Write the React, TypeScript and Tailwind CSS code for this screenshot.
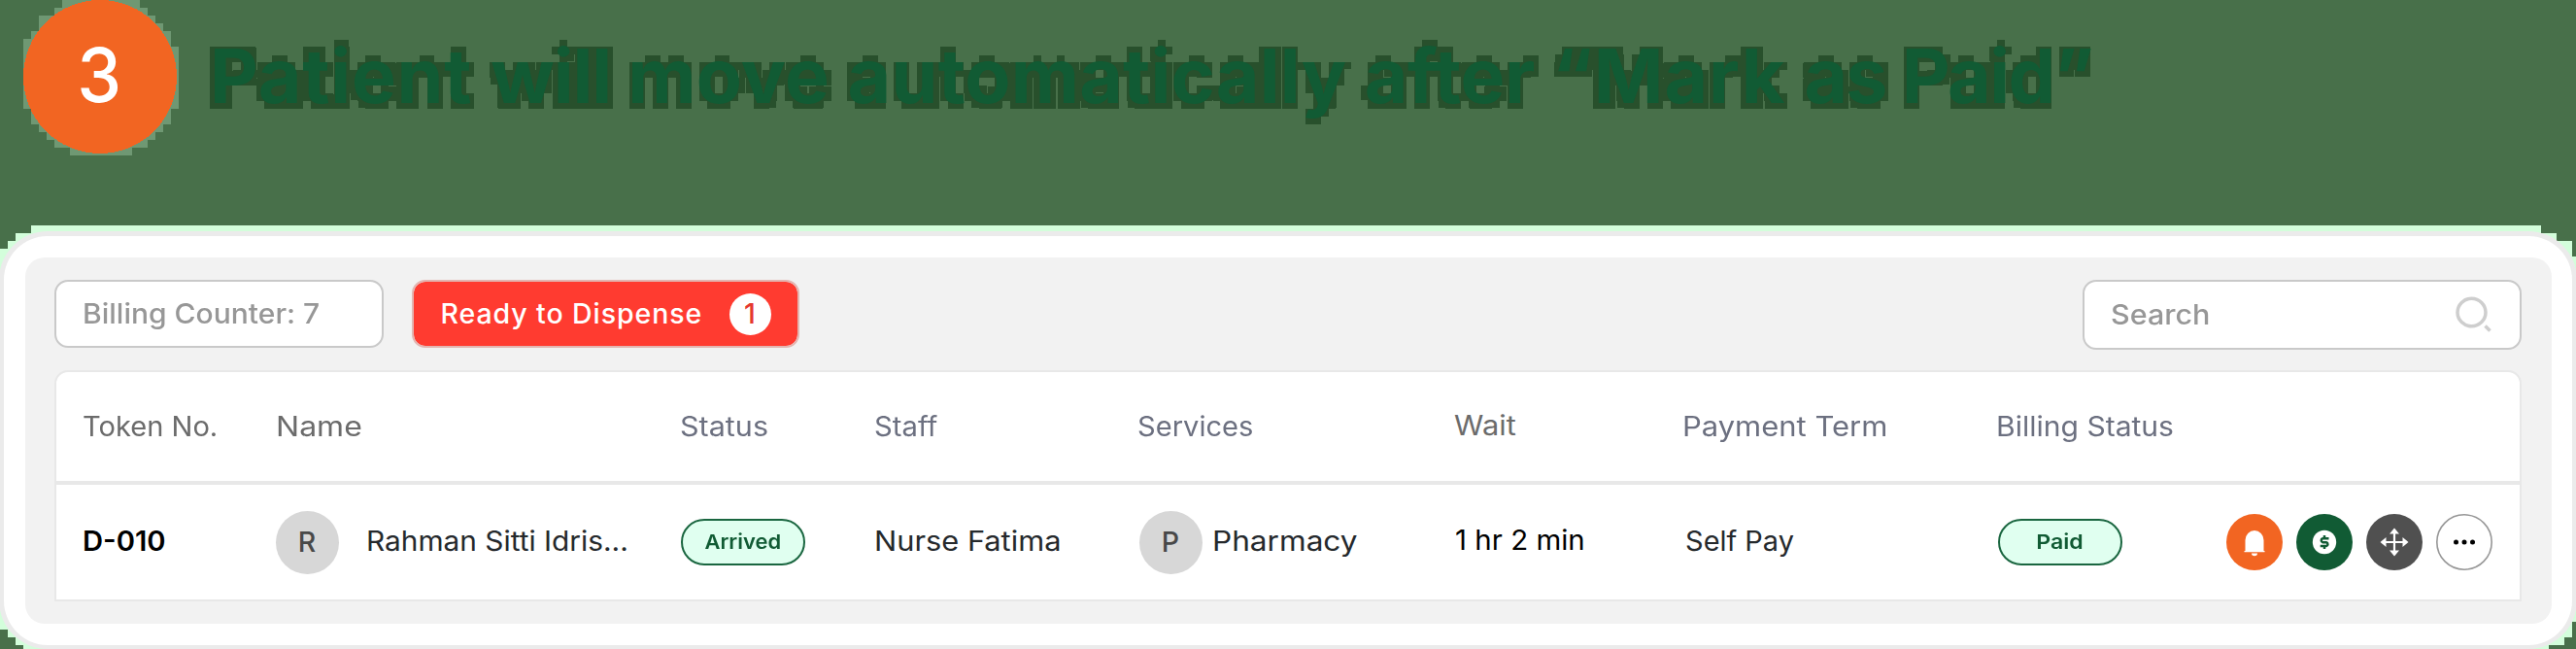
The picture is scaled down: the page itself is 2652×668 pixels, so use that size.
import type { ReactNode } from 'react';

const HALO_ROWS: [number, number, number, number][] = [
  [64, 0, 80, 8],
  [56, 8, 96, 8],
  [40, 16, 120, 8],
  [40, 24, 128, 8],
  [32, 32, 144, 8],
  [24, 40, 152, 8],
  [24, 48, 160, 64],
  [32, 112, 144, 16],
  [40, 128, 128, 8],
  [48, 136, 112, 8],
  [56, 144, 96, 8],
  [72, 152, 64, 8],
];

function StepBadge() {
  return (
    <div className="relative h-40 w-46 shrink-0">
      <svg className="absolute inset-0" width="184" height="160" shapeRendering="crispEdges" aria-hidden="true">
        {HALO_ROWS.map(([x, y, w, h]) => (
          <rect key={y} x={x} y={y} width={w} height={h} fill="#6f9873" />
        ))}
        <circle cx="103" cy="79" r="79" fill="#f26522" />
      </svg>
      <div className="relative flex h-[158px] w-[206px] items-center justify-center text-[77px] font-medium text-white">
        <span className="translate-x-[-1px] translate-y-[-1px] scale-x-95">3</span>
      </div>
    </div>
  );
}

/* Paints an 8px mosaic of the text's silhouette behind the text. */
function MosaicFilter() {
  return (
    <svg width="0" height="0" className="absolute" aria-hidden="true">
      <filter id="mosaic" filterUnits="userSpaceOnUse" primitiveUnits="userSpaceOnUse" x="0" y="0" width="2000" height="160" colorInterpolationFilters="sRGB">
        <feMorphology in="SourceAlpha" operator="dilate" radius="3" result="fat" />
        <feFlood x="3" y="3" width="2" height="2" floodColor="#000" result="dot" />
        <feOffset in="dot" dx="0" dy="0" x="0" y="0" width="8" height="8" result="cell" />
        <feTile in="cell" result="grid" />
        <feComposite in="fat" in2="grid" operator="in" />
        <feComponentTransfer>
          <feFuncA type="discrete" tableValues="0 0 1 1" />
        </feComponentTransfer>
        <feMorphology operator="dilate" radius="3" result="blocks" />
        <feFlood floodColor="#28502c" />
        <feComposite in2="blocks" operator="in" result="backing" />
        <feMerge>
          <feMergeNode in="backing" />
          <feMergeNode in="SourceGraphic" />
        </feMerge>
      </filter>
    </svg>
  );
}

function CardEdge() {
  return (
    <svg className="absolute top-0 left-0" width="2652" height="436" shapeRendering="crispEdges" aria-hidden="true">
      <path
        d="M32 0H2616V8H2632V16H2648V32H2652V408H2648V424H2640V432H2624V436H24V432H16V424H8V416H0V24H8V16H16V8H32Z"
        fill="#d3fedb"
      />
    </svg>
  );
}

function Avatar({ children }: { children: ReactNode }) {
  return (
    <div className="flex size-[65px] shrink-0 items-center justify-center rounded-full bg-[#d7d7d7] text-[28.5px] font-medium text-[#484848]">
      {children}
    </div>
  );
}

function Pill({ children }: { children: ReactNode }) {
  return (
    <div className="flex h-12 w-32 items-center justify-center rounded-full border-2 border-[#1a6640] bg-[#e0fff0] text-[20.5px] font-semibold text-[#115b34]">
      {children}
    </div>
  );
}

function BellIcon() {
  return (
    <svg width="58" height="58" viewBox="0 0 58 58" fill="#fff">
      <path d="M19.500 38V27a9.500 10 0 0 1 19 0v11h1v1.300H18.500V38z" />
      <path d="M26 40.500h6a3 2.800 0 0 1-6 0z" />
    </svg>
  );
}

function DollarIcon() {
  return (
    <svg width="58" height="58" viewBox="0 0 58 58">
      <circle cx="29" cy="29" r="12.200" fill="#fff" />
      <path d="M33.500 25.300h-6.200a2 2 0 0 0 0 3.900h3.600a2 2 0 0 1 0 3.900h-6.200M29 22v3M29 33.500V36" fill="none" stroke="#115b34" strokeWidth="2.500" />
    </svg>
  );
}

function MoveIcon() {
  return (
    <svg width="58" height="58" viewBox="0 0 58 58" fill="#fff">
      <path d="M29 17.500v23M17.500 29h23" stroke="#fff" strokeWidth="2.200" />
      <path d="M29 14.500l5 6H24zM29 43.500l5-6H24zM14.500 29l6-5v10zM43.500 29l-6-5v10z" />
    </svg>
  );
}

function MoreIcon() {
  return (
    <svg width="58" height="58" viewBox="0 0 58 58" fill="#000">
      <circle cx="29" cy="29" r="28.200" fill="#fff" stroke="#979797" strokeWidth="1.600" />
      <circle cx="20.500" cy="29" r="2.500" />
      <circle cx="29" cy="29" r="2.500" />
      <circle cx="37.500" cy="29" r="2.500" />
    </svg>
  );
}

const GRID = 'grid grid-cols-[199px_416px_200px_271px_325px_236px_323px_236px_1fr] items-center pl-[26.5px]';

export default function App() {
  return (
    <div className="h-[668px] w-[2652px] overflow-hidden bg-[#48704a] font-['Inter',sans-serif] whitespace-nowrap">
      <MosaicFilter />
      <header className="flex h-[232px] items-start">
        <StepBadge />
        <h1 className="ml-8 h-40 w-[2000px] text-[77px] leading-[157px] font-bold text-[#115b34] [filter:url(#mosaic)]">
          <span className="tracking-[0.8px]">Patient </span>
          <span className="tracking-[-1.1px]">will </span>
          <span className="tracking-[0.3px]">move </span>
          <span className="tracking-[0.2px]">automatically </span>
          <span className="tracking-[-0.3px]">after </span>
          <span className="tracking-[1px]">“Mark </span>
          <span className="tracking-[-2px]">as </span>
          <span className="tracking-[-1.5px]">Paid”</span>
        </h1>
      </header>

      <div className="relative">
        <CardEdge />
        <main className="relative -mx-px flex h-[436px] flex-col pt-1.5">
          <div className="flex h-[430px] flex-col rounded-[50px] border-x-5 border-t-5 border-b-4 border-[#ebebeb] bg-white px-[21.5px] pt-[21.500px] pb-[22px]">
            <div className="flex flex-1 flex-col rounded-[20px] bg-[#f2f2f2] pr-[31px] pl-[30.500px] pt-[23.500px]">
              <div className="flex h-[72px] items-start gap-[29px]">
                <div className="flex h-[70px] w-[339px] items-center rounded-[14px] border-2 border-[#c9c9c9] bg-white pl-[26.5px] text-[28.5px] font-medium text-[#979797]">
                  <span className="origin-left scale-x-[1.053]">Billing Counter: 7</span>
                </div>
                <div className="flex h-[70px] w-[399px] items-center rounded-[14px] border-2 border-[#e3b5b1] bg-[#ff3b30] bg-clip-padding pl-[27.500px] text-[28.5px] font-medium text-white">
                  <span className="w-[268px] origin-left tracking-[0.92px]">Ready to Dispense</span>
                  <span className="ml-[29px] flex size-[43px] items-center justify-center rounded-full bg-white text-[#e5392f]">
                    1
                  </span>
                </div>
                <div className="ml-auto flex h-[72px] w-[452px] items-center justify-between rounded-[14px] border-2 border-[#c9c9c9] bg-white pr-[29px] pl-[27px] text-[28.5px] font-medium text-[#979797]">
                  <span className="origin-left scale-x-[1.07]">Search</span>
                  <svg width="38" height="40" viewBox="0 0 38 40" fill="none" stroke="#cecece" strokeWidth="3.500">
                    <ellipse cx="17.500" cy="17.500" rx="14.500" ry="14.300" />
                    <path d="M31.500 31.500l5 5" />
                  </svg>
                </div>
              </div>

              <div className="mt-[21px] flex h-[238px] flex-col rounded-t-[14px] border-2 border-[#e8e8e8] bg-white text-[28px]">
                <div className={`${GRID} h-[116px] border-b-4 border-[#e8e8e8] pb-px text-[#6c7080]`}>
                  <span className="origin-left scale-x-[1.038] text-[#6b6b6b]">Token No.</span>
                  <span className="origin-left scale-x-[1.144] text-[#6b6b6b]">Name</span>
                  <span className="origin-left scale-x-[1.09]">Status</span>
                  <span className="origin-left scale-x-[1.044]">Staff</span>
                  <span className="origin-left scale-x-[1.039]">Services</span>
                  <span className="origin-left -translate-y-px scale-x-[1.1] pl-px text-[#6b6b6b]">Wait</span>
                  <span className="origin-left scale-x-[1.106]">Payment Term</span>
                  <span className="origin-left scale-x-[1.073]">Billing Status</span>
                </div>
                <div className={`${GRID} h-[118px] text-[#25292c]`}>
                  <span className="origin-left -translate-y-px scale-x-[1.043] font-semibold text-black">D-010</span>
                  <div className="flex items-center gap-[28px]">
                    <Avatar>R</Avatar>
                    <span className="origin-left -translate-y-px scale-x-[1.065]">Rahman Sitti Idris...</span>
                  </div>
                  <div className="pl-px">
                    <Pill>
                      <span className="scale-x-[1.07]">Arrived</span>
                    </Pill>
                  </div>
                  <span className="origin-left -translate-y-px scale-x-[1.1]">Nurse Fatima</span>
                  <div className="ml-[2px] flex items-center gap-[10px]">
                    <Avatar>P</Avatar>
                    <span className="origin-left -translate-y-px scale-x-[1.128]">Pharmacy</span>
                  </div>
                  <span className="origin-left -translate-y-0.5 scale-x-[1.052] pl-0.5 text-black">1 hr 2 min</span>
                  <span className="origin-left -translate-y-px scale-x-[1.033] pl-[3px]">Self Pay</span>
                  <div className="pl-0.5">
                    <Pill>
                      <span className="scale-x-[1.13]">Paid</span>
                    </Pill>
                  </div>
                  <div className="flex gap-3.5 pl-[1.500px]">
                    <div className="size-[58px] rounded-full bg-[#f26522]"><BellIcon /></div>
                    <div className="size-[58px] rounded-full bg-[#115b34]"><DollarIcon /></div>
                    <div className="size-[58px] rounded-full bg-[#505050]"><MoveIcon /></div>
                    <MoreIcon />
                  </div>
                </div>
              </div>
            </div>
          </div>
        </main>
      </div>
    </div>
  );
}
